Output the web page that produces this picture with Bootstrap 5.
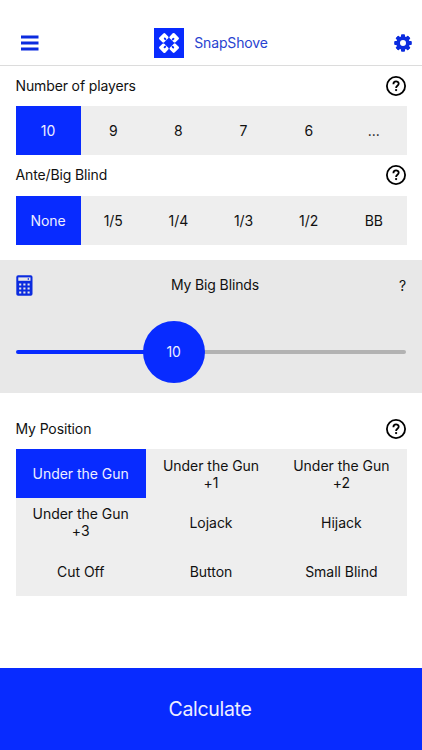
<!DOCTYPE html>
<html lang="en">

<head>
    <meta charset="UTF-8" />
    <meta name="viewport" content="width=device-width, initial-scale=1" />
    <title>SnapShove</title>
    <link rel="stylesheet" href="https://cdn.jsdelivr.net/npm/bootstrap@5.3.3/dist/css/bootstrap.min.css" />
    <style>
        :root {
            --snap-blue: #082bff;
        }

        body {
            font-family: Inter, "Liberation Sans", sans-serif;
            font-size: 14px;
            line-height: 17px;
            color: #111;
            letter-spacing: -.13px;
        }

        svg {
            display: block;
        }

        .page {
            height: 750px;
        }

        .top-bar {
            height: 66px;
            padding: 20px 10px 0 20.5px;
            border-bottom: 1px solid #dcdcdc;
            color: #0b2bdf;
        }

        .brand {
            margin-right: 11px;
        }

        .brand-name {
            color: #2843d0;
            margin-left: 10.5px;
        }

        .label-row {
            height: 40.3px;
            padding: 0 16px 0 15.5px;
        }

        .label-row span {
            padding-bottom: 1px;
        }

        .label-ante {
            height: 40.8px;
        }

        .choices {
            margin: 0 15.5px;
            background: #eee;
        }

        .choices .btn {
            --bs-btn-font-size: 14px;
            --bs-btn-line-height: 17px;
            --bs-btn-padding-x: 0;
            --bs-btn-padding-y: 0;
            --bs-btn-border-width: 0;
            --bs-btn-color: #111;
            --bs-btn-active-bg: var(--snap-blue);
            --bs-btn-active-color: #eef;
            height: 48.8px;
            letter-spacing: -.03px;
        }

        .slider-panel {
            height: 133px;
            margin-top: 15.3px;
            padding: 15px 16px 0 15.5px;
            background: #e8e8e8;
        }

        .panel-title {
            padding-right: 1.5px;
            padding-bottom: 1px;
        }

        .slider {
            height: 62px;
            margin-top: 25px;
        }

        .slider-track {
            height: 4px;
            border-radius: 2px;
            background: #b2b2b2;
        }

        .slider-fill {
            background: var(--snap-blue);
            border-radius: 2px 0 0 2px;
        }

        .slider-thumb {
            width: 62px;
            height: 62px;
            margin: 0 -31px;
            background: var(--snap-blue);
            color: #eef;
        }

        .calc-btn {
            height: 82px;
            padding: 2px 2px 0 0;
            background: var(--snap-blue);
            color: #eef;
            font-size: 19.5px;
            letter-spacing: -.3px;
        }
    </style>
</head>

<body>
    <div class="page d-flex flex-column">
        <!-- Top bar -->
        <header class="top-bar d-flex align-items-center justify-content-between">
            <svg width="18" height="16" viewBox="0 0 18 16" fill="none" stroke="currentColor" stroke-width="2.8">
                <path d="M0 2h17.5M0 8h17.5M0 14h17.5" />
            </svg>
            <div class="brand d-flex align-items-center">
                <svg width="30" height="30" viewBox="0 0 30 30">
                    <rect width="30" height="30" fill="#082bff" />
                    <g fill="#fff">
                        <g id="suit">
                            <path d="M11.2 5.4l3 3.1q.8.9 0 1.8l-4 4q-.9.9-1.8 0L5.3 11.3q-.8-.9 0-1.8l4.1-4.1q.9-.9 1.8 0z" />
                            <ellipse cx="11.1" cy="10.9" rx="1" ry="1.5" transform="rotate(-40 11.1 10.9)" fill="#082bff" />
                        </g>
                        <use href="#suit" transform="rotate(90 15 15)" />
                        <use href="#suit" transform="rotate(180 15 15)" />
                        <use href="#suit" transform="rotate(270 15 15)" />
                    </g>
                </svg>
                <span class="brand-name">SnapShove</span>
            </div>
            <svg width="18" height="18" viewBox="-9 -9 18 18" fill="currentColor">
                <g id="teeth">
                    <rect x="-2" y="-8.8" width="4" height="17.6" rx="1" mask="url(#hub)" />
                    <rect x="-8.8" y="-2" width="17.6" height="4" rx="1" mask="url(#hub)" />
                </g>
                <use href="#teeth" transform="rotate(45)" />
                <circle r="4.9" fill="none" stroke="currentColor" stroke-width="3.8" />
                <mask id="hub" maskUnits="userSpaceOnUse" x="-9" y="-9" width="18" height="18">
                    <rect x="-9" y="-9" width="18" height="18" fill="#fff" />
                    <circle r="4" fill="#000" />
                </mask>
            </svg>
        </header>

        <!-- Players -->
        <div class="label-row d-flex align-items-center justify-content-between">
            <span>Number of players</span>
            <svg width="20" height="20" viewBox="0 0 20 20" fill="none" stroke="#000">
                <g id="help">
                    <circle cx="10" cy="10" r="9.1" stroke-width="1.8" />
                    <path d="M7.4 8.2c0-3.7 5.3-3.5 5.3-.4 0 2-2.6 1.9-2.6 4.1" stroke-width="1.8" />
                    <circle cx="10.1" cy="14.1" r="1.15" fill="#000" stroke="none" />
                </g>
            </svg>
        </div>
        <div class="choices row row-cols-6 g-0">
            <button class="btn rounded-0 active">10</button>
            <button class="btn">9</button>
            <button class="btn">8</button>
            <button class="btn">7</button>
            <button class="btn">6</button>
            <button class="btn">...</button>
        </div>

        <!-- Ante -->
        <div class="label-row label-ante d-flex align-items-center justify-content-between">
            <span>Ante/Big Blind</span>
            <svg width="20" height="20" viewBox="0 0 20 20" fill="none" stroke="#000">
                <use href="#help" />
            </svg>
        </div>
        <div class="choices row row-cols-6 g-0">
            <button class="btn rounded-0 active">None</button>
            <button class="btn">1/5</button>
            <button class="btn">1/4</button>
            <button class="btn">1/3</button>
            <button class="btn">1/2</button>
            <button class="btn">BB</button>
        </div>

        <!-- Stack slider -->
        <section class="slider-panel">
            <div class="d-flex align-items-center justify-content-between">
                <svg width="17" height="21" viewBox="0 0 17 21">
                    <rect x=".3" y=".2" width="16.2" height="20.5" rx="1.8" fill="#0b2bdf" />
                    <path d="M2.3 2.4h12.2v3.4H2.3z" fill="#e8e8e8" />
                    <path d="M11.7 3.2h1.3v1.6h-1.3z" fill="#0b2bdf" />
                    <path d="M4.2 8.4v11M8.4 8.4v11M12.6 8.4v11" stroke="#e8e8e8" stroke-width="2.1" stroke-dasharray="2.1 1.9" />
                </svg>
                <span class="panel-title">My Big Blinds</span>
                <span>?</span>
            </div>
            <div class="slider d-flex align-items-center">
                <div class="slider-track slider-fill" style="width: 40.5%"></div>
                <div class="slider-thumb rounded-circle d-flex align-items-center justify-content-center flex-shrink-0 z-1">10</div>
                <div class="slider-track flex-grow-1"></div>
            </div>
        </section>

        <!-- Position -->
        <div class="label-row d-flex align-items-center justify-content-between mt-3">
            <span>My Position</span>
            <svg width="20" height="20" viewBox="0 0 20 20" fill="none" stroke="#000">
                <use href="#help" />
            </svg>
        </div>
        <div class="choices row row-cols-3 g-0">
            <button class="btn rounded-0 active">Under the Gun</button>
            <button class="btn">Under the Gun<br>+1</button>
            <button class="btn">Under the Gun<br>+2</button>
            <button class="btn">Under the Gun<br>+3</button>
            <button class="btn">Lojack</button>
            <button class="btn">Hijack</button>
            <button class="btn">Cut Off</button>
            <button class="btn">Button</button>
            <button class="btn">Small Blind</button>
        </div>

        <button class="calc-btn btn rounded-0 border-0 w-100 mt-auto">Calculate</button>
    </div>

    <script src="https://cdn.jsdelivr.net/npm/bootstrap@5.3.3/dist/js/bootstrap.bundle.min.js"></script>
</body>

</html>
